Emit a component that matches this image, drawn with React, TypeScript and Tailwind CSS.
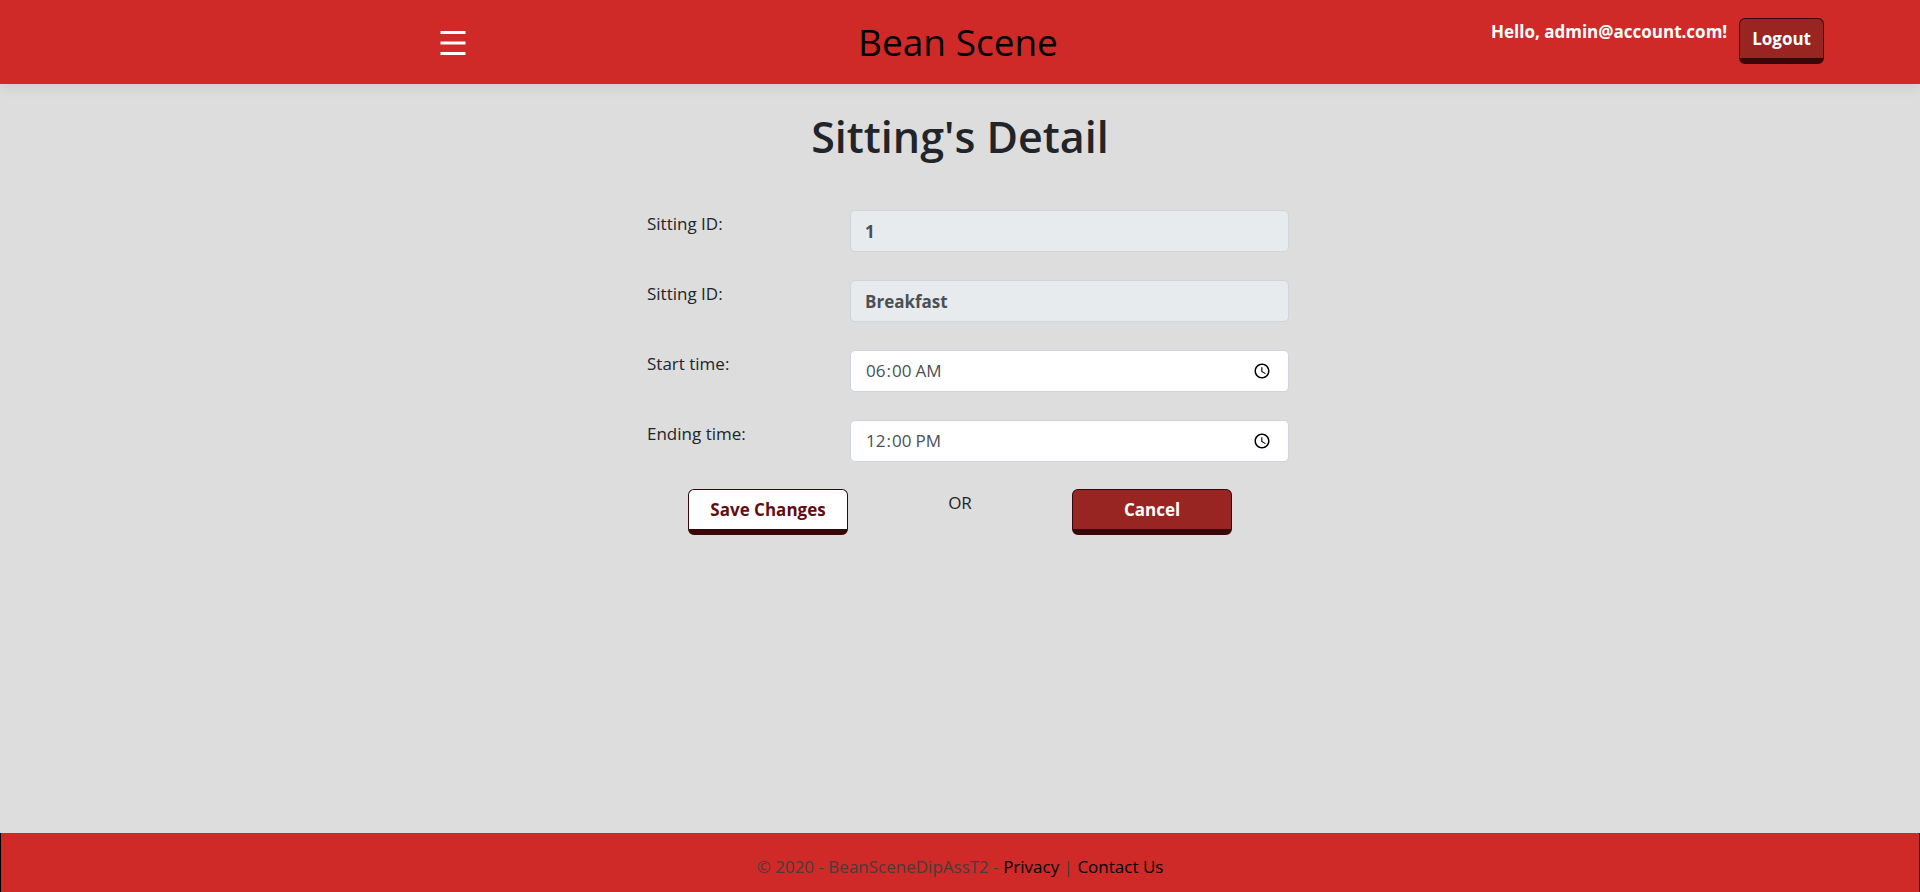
import type { ReactNode } from "react";

const BORDER = "rounded-md border border-b-6 border-[#380709]";
const FIELD =
  "block w-full rounded-[5px] border border-[#ced4da] px-[14px] text-[17px] leading-6 text-[#495057]";

function Row({ id, label, children }: { id: string; label: string; children: ReactNode }) {
  return (
    <div className="flex items-start">
      <label htmlFor={id} className="w-[203px] shrink-0 text-[17px] leading-7">
        {label}
      </label>
      <div className="flex-1">{children}</div>
    </div>
  );
}

function Header() {
  return (
    <header className="grid h-[84px] grid-cols-[1fr_auto_1fr] bg-[#cf2a28] shadow-[0_4px_12px_rgba(0,0,0,0.07)]">
      <div className="flex items-center pl-[51%]">
        <button type="button" aria-label="Open menu" className="cursor-pointer py-1 pr-1 pl-0.5 text-white">
          <svg width="26" height="26" viewBox="0 0 26 26" fill="currentColor" aria-hidden="true">
            <rect x="0.5" y="2" width="25" height="3" />
            <rect x="0.5" y="12.5" width="25" height="3" />
            <rect x="0.5" y="23" width="25" height="3" />
          </svg>
        </button>
      </div>
      <a href="#" className="self-center pr-1 text-[37px] leading-[48px] text-black">
        Bean Scene
      </a>
      <div className="flex items-start justify-end gap-3 pt-[18px] pr-24 font-bold text-white">
        <span className="text-[17px] leading-7">Hello, admin@account.com!</span>
        <button type="button" className={`${BORDER} h-[46px] cursor-pointer bg-[#992523] px-3 text-[17px] leading-6`}>
          Logout
        </button>
      </div>
    </header>
  );
}

export default function App() {
  return (
    <div className="flex min-h-screen flex-col bg-[#dddddd] font-['Open_Sans','Noto_Sans',sans-serif] text-[#212529]">
      <Header />
      <main className="flex-1 px-4 pt-[25px]">
        <h1 className="text-center text-[43px] leading-[56px] font-semibold">Sitting's Detail</h1>
        <form className="pt-[45px]">
          <div className="mx-auto flex max-w-[658px] flex-col gap-7 pl-4">
            <Row id="sitting-id" label="Sitting ID:">
              <input id="sitting-id" readOnly value="1" className={`${FIELD} h-[42px] bg-[#e7ebee] font-bold`} />
            </Row>
            <Row id="sitting-name" label="Sitting ID:">
              <input id="sitting-name" readOnly value="Breakfast" className={`${FIELD} h-[42px] bg-[#e7ebee] font-bold`} />
            </Row>
            <Row id="start" label="Start time:">
              <input id="start" type="time" defaultValue="06:00" className={`${FIELD} h-[42px] bg-white`} />
            </Row>
            <Row id="end" label="Ending time:">
              <input id="end" type="time" defaultValue="12:00" className={`${FIELD} h-[42px] bg-white`} />
            </Row>
          </div>
          <div className="mx-auto grid max-w-[576px] grid-cols-3 items-start justify-items-center pt-[27px] text-[17px]">
            <button type="button" className={`${BORDER} h-[46px] w-40 cursor-pointer bg-white font-bold text-[#610e10]`}>
              Save Changes
            </button>
            <span className="leading-7">OR</span>
            <button type="button" className={`${BORDER} h-[46px] w-40 cursor-pointer bg-[#992523] font-bold text-white`}>
              Cancel
            </button>
          </div>
        </form>
      </main>
      <footer className="h-[59px] border-x border-black bg-[#cf2a28] pt-5 text-center text-[17px] leading-7 text-[#4a3a3c]">
        © 2020 - BeanSceneDipAssT2 -{" "}
        <a href="#privacy" className="text-black">Privacy</a> |{" "}
        <a href="#contact" className="text-black">Contact Us</a>
      </footer>
    </div>
  );
}
